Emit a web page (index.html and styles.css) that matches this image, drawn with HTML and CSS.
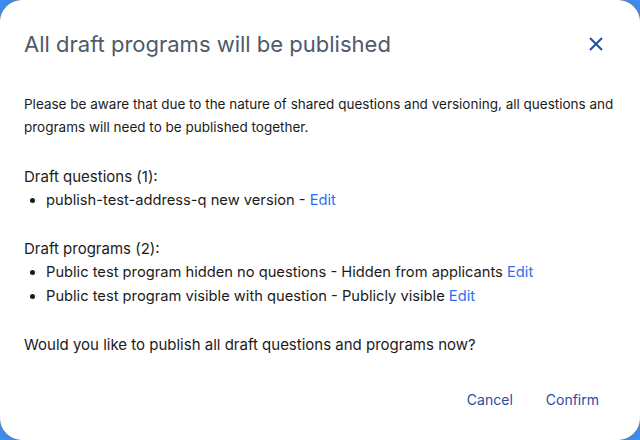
FILE: index.html
```html
<!DOCTYPE html>
<html lang="en">
<head>
<meta charset="utf-8">
<title>Publish all</title>
<link rel="stylesheet" href="styles.css">
</head>
<body>
<div class="dialog" role="dialog">
  <div class="header">
    <h1 class="title">All draft programs will be published</h1>
    <button class="close" aria-label="Close">
      <svg width="14" height="14" viewBox="0 0 14 14"><path d="M1 1L13 13M13 1L1 13" stroke="#1f4ea3" stroke-width="2" fill="none"/></svg>
    </button>
  </div>
  <div class="content">
    <p class="intro">Please be aware that due to the nature of shared questions and versioning, all questions and programs will need to be published together.</p>
    <p class="label">Draft questions (1):</p>
    <ul class="list">
      <li>publish-test-address-q new version - <a class="edit" href="#">Edit</a></li>
    </ul>
    <p class="label">Draft programs (2):</p>
    <ul class="list">
      <li>Public test program hidden no questions - Hidden from applicants <a class="edit" href="#">Edit</a></li>
      <li>Public test program visible with question - Publicly visible <a class="edit" href="#">Edit</a></li>
    </ul>
    <p class="label">Would you like to publish all draft questions and programs now?</p>
  </div>
  <div class="actions">
    <button class="action">Cancel</button>
    <button class="action">Confirm</button>
  </div>
</div>
</body>
</html>
```
FILE: styles.css
```css
html, body {
  margin: 0;
  padding: 0;
  height: 100%;
}
body {
  background: #3b8cf4;
  font-family: Inter, "Liberation Sans", sans-serif;
  color: #1b1b1b;
}
.dialog {
  box-sizing: border-box;
  width: 640px;
  height: 440px;
  background: #fff;
  border-radius: 22px;
  box-shadow: 0 0 3px 1px rgba(120, 120, 120, 0.7);
  display: flex;
  flex-direction: column;
}
.header {
  display: flex;
  align-items: center;
  justify-content: space-between;
  padding: 30px 37px 0 24px;
}
.title {
  margin: 0;
  font-size: 22px;
  line-height: 28px;
  font-weight: 400;
  color: #4e5a6b;
}
.close {
  border: 0;
  background: none;
  padding: 0;
  width: 14px;
  height: 14px;
  display: flex;
  cursor: pointer;
}
.content {
  padding: 35px 24px 0 24px;
}
.intro {
  margin: 0 0 26px;
  font-size: 13.5px;
  line-height: 23px;
}
.label {
  margin: 0;
  font-size: 15px;
  line-height: 23px;
}
.list {
  margin: 0 0 25px;
  padding: 0 0 0 22px;
  font-size: 14.7px;
  line-height: 24px;
}
.edit {
  color: #2b6ef0;
  text-decoration: none;
}
.actions {
  display: flex;
  justify-content: flex-end;
  gap: 33px;
  padding: 32px 41px 0 0;
}
.action {
  border: 0;
  background: none;
  padding: 0;
  font-family: inherit;
  font-size: 14px;
  line-height: 24px;
  color: #1f4ea3;
  cursor: pointer;
}
```
